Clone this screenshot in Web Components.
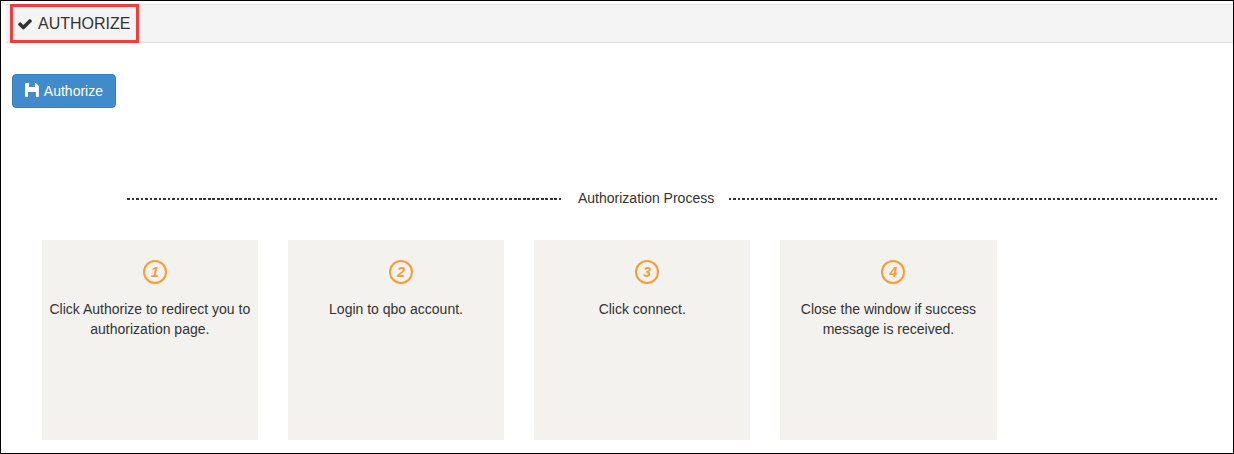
<!DOCTYPE html>
<html>
<head>
<meta charset="utf-8">
<title>Authorize</title>
<style>
    html, body { margin: 0; padding: 0; background: #fff; }
    body { font-family: "Liberation Sans", Arial, sans-serif; font-size: 14px; color: #333; }
</style>
</head>
<body>
<auth-page>
    <page-header slot="header">AUTHORIZE</page-header>
    <save-button slot="action">Authorize</save-button>
    <process-title slot="title">Authorization Process</process-title>
    <step-card num="1">Click Authorize to redirect you to authorization page.</step-card>
    <step-card num="2">Login to qbo account.</step-card>
    <step-card num="3">Click connect.</step-card>
    <step-card num="4">Close the window if success message is received.</step-card>
</auth-page>
<script>
const CHECK_PATH = 'M1671 566q0 40-28 68l-724 724-136 136q-28 28-68 28t-68-28l-136-136-362-362q-28-28-28-68t28-68l136-136q28-28 68-28t68 28l294 295 656-657q28-28 68-28t68 28l136 136q28 28 28 68z';
// floppy disk: solid body with a notch at the top and a window at the bottom
const SAVE_PATH = 'M1 0H11L14 3V13Q14 14 13 14H1Q0 14 0 13V1Q0 0 1 0ZM4 0V4H10V0ZM3 9V14H11V9Z';

class AuthPage extends HTMLElement {
    constructor () {
        super();
        this.attachShadow({ mode: 'open' }).innerHTML = `
            <style>
                :host {
                    display: flex;
                    flex-direction: column;
                    box-sizing: border-box;
                    width: 1234px;
                    height: 454px;
                    border: 1px solid #000;
                    padding-top: 3px;
                    overflow: hidden;
                }
                .action { padding: 31px 0 0 11px; }
                .title { padding: 80px 16px 0 126px; }
                .steps { display: flex; gap: 30px; padding: 32px 0 0 40.75px; }
            </style>
            <slot name="header"></slot>
            <div class="action"><slot name="action"></slot></div>
            <div class="title"><slot name="title"></slot></div>
            <div class="steps"><slot></slot></div>`;
    }
}

class PageHeader extends HTMLElement {
    constructor () {
        super();
        this.attachShadow({ mode: 'open' }).innerHTML = `
            <style>
                :host {
                    display: block;
                    position: relative;
                    box-sizing: border-box;
                    height: 39px;
                    margin-left: 5px;
                    background: #f4f4f4;
                    border-top: 1px solid #e2e2e2;
                    border-bottom: 1px solid #ddd;
                }
                .head {
                    display: flex;
                    align-items: center;
                    gap: 5px;
                    height: 37px;
                    padding-left: 11px;
                    font-size: 16px;
                    color: #333;
                }
                svg { width: 16px; height: 16px; fill: #333; }
                /* red annotation drawn over the screenshot */
                .mark {
                    position: absolute;
                    left: 4px;
                    top: -1px;
                    width: 129px;
                    height: 39px;
                    box-sizing: border-box;
                    border: 3px solid #f33c3c;
                }
            </style>
            <div class="head">
                <svg viewBox="0 0 1792 1792"><path d="${CHECK_PATH}"/></svg>
                <span><slot></slot></span>
            </div>
            <div class="mark"></div>`;
    }
}

class SaveButton extends HTMLElement {
    constructor () {
        super();
        this.attachShadow({ mode: 'open' }).innerHTML = `
            <style>
                :host { display: inline-block; }
                button {
                    display: flex;
                    align-items: center;
                    gap: 5px;
                    box-sizing: border-box;
                    width: 104px;
                    height: 34px;
                    padding: 0 12px;
                    background: #428bca;
                    border: 1px solid #357ebd;
                    border-radius: 4px;
                    color: #fff;
                    font: 14px "Liberation Sans", Arial, sans-serif;
                    cursor: pointer;
                }
                svg { width: 14px; height: 14px; fill: #fff; fill-rule: evenodd; margin-top: -2px; }
            </style>
            <button>
                <svg viewBox="0 0 14 14"><path d="${SAVE_PATH}"/></svg>
                <span><slot></slot></span>
            </button>`;
    }
}

class ProcessTitle extends HTMLElement {
    constructor () {
        super();
        this.attachShadow({ mode: 'open' }).innerHTML = `
            <style>
                :host {
                    display: flex;
                    align-items: center;
                    height: 20px;
                    color: #333;
                    font-size: 14px;
                }
                .rule {
                    height: 2px;
                    margin-top: 2px;
                    background: repeating-linear-gradient(90deg, #333 0 2.5px, transparent 2.5px 4.5px);
                }
                .left { width: 434px; }
                .right { flex: 1; }
                .text { padding: 0 15px 0 17px; white-space: nowrap; }
            </style>
            <div class="rule left"></div>
            <div class="text"><slot></slot></div>
            <div class="rule right"></div>`;
    }
}

class StepCard extends HTMLElement {
    constructor () {
        super();
        this.attachShadow({ mode: 'open' }).innerHTML = `
            <style>
                :host {
                    display: flex;
                    flex-direction: column;
                    align-items: center;
                    box-sizing: border-box;
                    width: 216.2px;
                    height: 200px;
                    padding: 20px 5px 0;
                    background: #f3f2ee;
                    color: #333;
                    font-size: 14px;
                    line-height: 20px;
                    text-align: center;
                }
                .num {
                    display: flex;
                    align-items: center;
                    justify-content: center;
                    box-sizing: border-box;
                    width: 24px;
                    height: 24px;
                    margin-left: 10px;
                    border: 2px solid #f89c35;
                    border-radius: 50%;
                    color: #f89c35;
                    font-size: 14px;
                    font-weight: bold;
                    font-style: italic;
                }
                .text { margin-top: 15px; }
            </style>
            <div class="num"></div>
            <div class="text"><slot></slot></div>`;
        this.numNode = this.shadowRoot.querySelector('.num');
    }
    connectedCallback () {
        this.numNode.textContent = this.getAttribute('num');
    }
}

customElements.define('auth-page', AuthPage);
customElements.define('page-header', PageHeader);
customElements.define('save-button', SaveButton);
customElements.define('process-title', ProcessTitle);
customElements.define('step-card', StepCard);
</script>
</body>
</html>
